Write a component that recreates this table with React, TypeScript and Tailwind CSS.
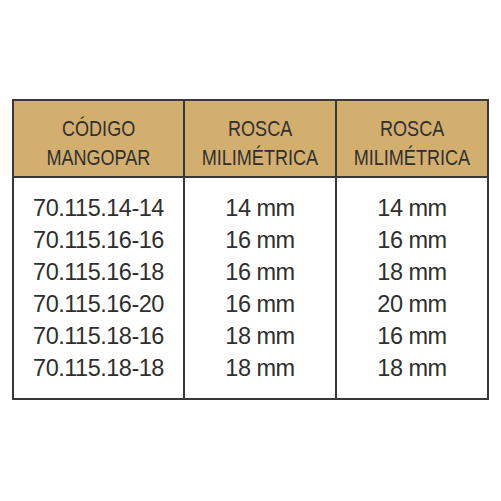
const rows: [string, string, string][] = [
  ["70.115.14-14", "14 mm", "14 mm"],
  ["70.115.16-16", "16 mm", "16 mm"],
  ["70.115.16-18", "16 mm", "18 mm"],
  ["70.115.16-20", "16 mm", "20 mm"],
  ["70.115.18-16", "18 mm", "16 mm"],
  ["70.115.18-18", "18 mm", "18 mm"],
];

const headers = [
  ["CÓDIGO", "MANGOPAR"],
  ["ROSCA", "MILIMÉTRICA"],
  ["ROSCA", "MILIMÉTRICA"],
];

export default function App() {
  return (
    <div className="w-[501px] h-[501px] bg-white pt-[99px] pl-[12px]">
      <div className="w-[477px] border-2 border-[#383838] text-[#2f2f2f]">
        {/* header — condensed caps, squeezed horizontally */}
        <div
          className="grid grid-cols-[169px_152px_1fr] h-[77px] bg-[#d3af6f] border-b-2 border-[#383838]"
          style={{ fontFamily: '"Liberation Sans", Arial, sans-serif' }}
        >
          {headers.map((h, i) => (
            <div
              key={i}
              className={`flex flex-col items-center pt-[13px] text-[22px] leading-[29px] ${i > 0 ? "border-l-2 border-[#383838]" : ""}`}
            >
              <span className="inline-block whitespace-nowrap scale-x-[0.82]">{h[0]}</span>
              <span className="inline-block whitespace-nowrap scale-x-[0.82]">{h[1]}</span>
            </div>
          ))}
        </div>

        {/* body */}
        <div
          className="grid grid-cols-[169px_152px_1fr] text-[23.5px] leading-[32px] tracking-[-0.5px]"
          style={{ fontFamily: '"Liberation Sans", Arial, sans-serif' }}
        >
          <div className="flex flex-col items-center py-[14px]">
            {rows.map((r) => (
              <span key={r[0]}>{r[0]}</span>
            ))}
          </div>
          <div className="flex flex-col items-center py-[14px] border-l-2 border-[#383838]">
            {rows.map((r) => (
              <span key={r[0]}>{r[1]}</span>
            ))}
          </div>
          <div className="flex flex-col items-center py-[14px] border-l-2 border-[#383838]">
            {rows.map((r) => (
              <span key={r[0]}>{r[2]}</span>
            ))}
          </div>
        </div>
      </div>
    </div>
  );
}
